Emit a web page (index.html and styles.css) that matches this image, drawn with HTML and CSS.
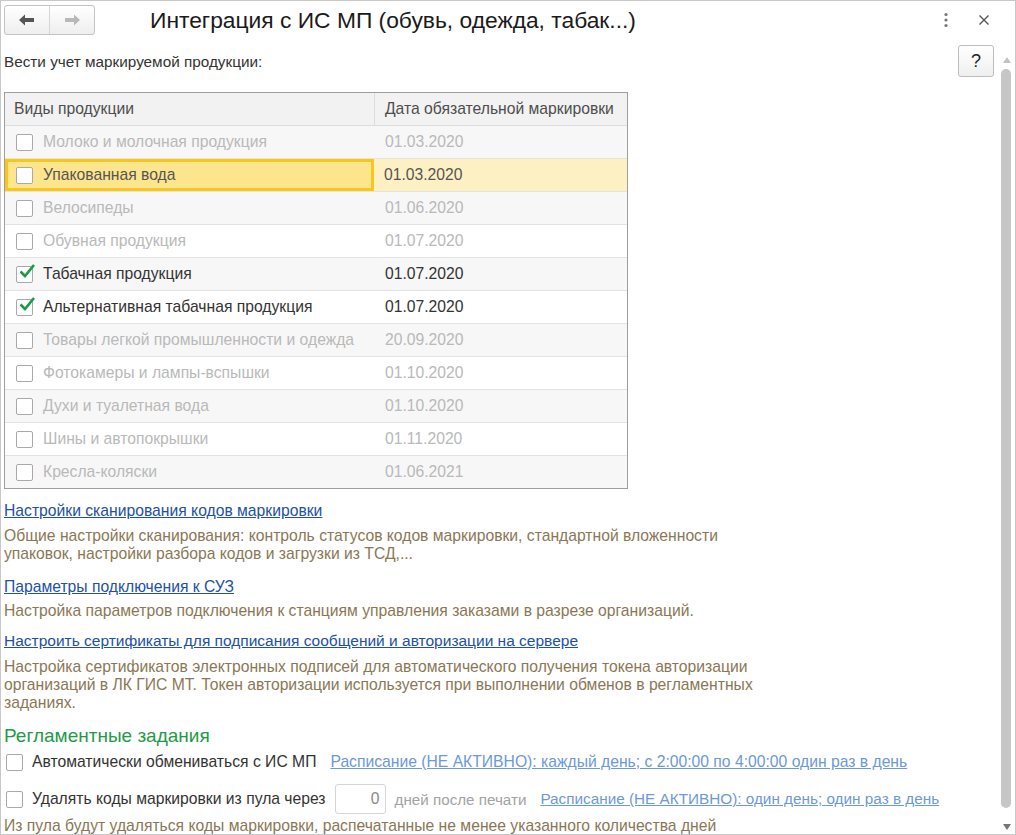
FILE: index.html
```html
<!DOCTYPE html>
<html lang="ru">
<head>
<meta charset="utf-8">
<title>Интеграция с ИС МП</title>
<link rel="stylesheet" href="styles.css">
</head>
<body>
<div class="window">
  <div class="topbar">
    <div class="nav">
      <button class="nav-btn">
        <svg width="18" height="14" viewBox="0 0 18 14"><path d="M1 7 L7 1.5 V5 H16 V9 H7 V12.5 Z" fill="#555"/></svg>
      </button>
      <button class="nav-btn">
        <svg width="18" height="14" viewBox="0 0 18 14"><path d="M17 7 L11 1.5 V5 H2 V9 H11 V12.5 Z" fill="#b8b8b8"/></svg>
      </button>
    </div>
    <h1 class="title">Интеграция с ИС МП (обувь, одежда, табак...)</h1>
    <div class="win-actions">
      <svg class="kebab" width="6" height="16" viewBox="0 0 6 16"><circle cx="3" cy="2.5" r="1.6" fill="#777"/><circle cx="3" cy="8" r="1.6" fill="#777"/><circle cx="3" cy="13.5" r="1.6" fill="#777"/></svg>
      <svg class="close" width="12" height="12" viewBox="0 0 12 12"><path d="M1.5 1.5 L10.5 10.5 M10.5 1.5 L1.5 10.5" stroke="#555" stroke-width="1.4"/></svg>
    </div>
  </div>
  <div class="body">
    <div class="content">
      <div class="lead-row">
        <span class="lead">Вести учет маркируемой продукции:</span>
        <button class="help">?</button>
      </div>
      <div class="grid">
        <div class="grid-head">
          <div class="c1">Виды продукции</div>
          <div class="c2">Дата обязательной маркировки</div>
        </div>
        <div class="row odd dis"><div class="c1"><span class="cb"></span>Молоко и молочная продукция</div><div class="c2">01.03.2020</div></div>
        <div class="row cur"><div class="c1"><span class="cb"></span>Упакованная вода</div><div class="c2">01.03.2020</div></div>
        <div class="row odd dis"><div class="c1"><span class="cb"></span>Велосипеды</div><div class="c2">01.06.2020</div></div>
        <div class="row dis"><div class="c1"><span class="cb"></span>Обувная продукция</div><div class="c2">01.07.2020</div></div>
        <div class="row odd"><div class="c1"><span class="cb"><svg class="tick" width="18" height="16" viewBox="0 0 18 16"><path d="M2.5 8.5 L7 13 L16 2" fill="none" stroke="#1a9b48" stroke-width="2.6"/></svg></span>Табачная продукция</div><div class="c2">01.07.2020</div></div>
        <div class="row"><div class="c1"><span class="cb"><svg class="tick" width="18" height="16" viewBox="0 0 18 16"><path d="M2.5 8.5 L7 13 L16 2" fill="none" stroke="#1a9b48" stroke-width="2.6"/></svg></span>Альтернативная табачная продукция</div><div class="c2">01.07.2020</div></div>
        <div class="row odd dis"><div class="c1"><span class="cb"></span>Товары легкой промышленности и одежда</div><div class="c2">20.09.2020</div></div>
        <div class="row dis"><div class="c1"><span class="cb"></span>Фотокамеры и лампы-вспышки</div><div class="c2">01.10.2020</div></div>
        <div class="row odd dis"><div class="c1"><span class="cb"></span>Духи и туалетная вода</div><div class="c2">01.10.2020</div></div>
        <div class="row dis"><div class="c1"><span class="cb"></span>Шины и автопокрышки</div><div class="c2">01.11.2020</div></div>
        <div class="row odd dis"><div class="c1"><span class="cb"></span>Кресла-коляски</div><div class="c2">01.06.2021</div></div>
      </div>

      <a class="link l1" href="#">Настройки сканирования кодов маркировки</a>
      <p class="desc d1">Общие настройки сканирования: контроль статусов кодов маркировки, стандартной вложенности упаковок, настройки разбора кодов и загрузки из ТСД,...</p>
      <a class="link l2" href="#">Параметры подключения к СУЗ</a>
      <p class="desc d2">Настройка параметров подключения к станциям управления заказами в разрезе организаций.</p>
      <a class="link l3" href="#">Настроить сертификаты для подписания сообщений и авторизации на сервере</a>
      <p class="desc d3">Настройка сертификатов электронных подписей для автоматического получения токена авторизации организаций в ЛК ГИС МТ. Токен авторизации используется при выполнении обменов в регламентных заданиях.</p>

      <h2 class="section">Регламентные задания</h2>
      <div class="task t1">
        <span class="cb"></span>
        <span class="task-label">Автоматически обмениваться с ИС МП</span>
        <a class="sched" href="#">Расписание (НЕ АКТИВНО): каждый день; с 2:00:00 по 4:00:00 один раз в день</a>
      </div>
      <div class="task t2">
        <span class="cb"></span>
        <span class="task-label">Удалять коды маркировки из пула через</span>
        <span class="num">0</span>
        <span class="days">дней после печати</span>
        <a class="sched" href="#">Расписание (НЕ АКТИВНО): один день; один раз в день</a>
      </div>
      <p class="desc note">Из пула будут удаляться коды маркировки, распечатанные не менее указанного количества дней</p>
    </div>
    <div class="scrollbar">
      <span class="arrow up"></span>
      <span class="thumb"></span>
      <span class="arrow down"></span>
    </div>
  </div>
</div>
</body>
</html>
```

FILE: styles.css
```css
* { box-sizing: border-box; }
html, body { margin: 0; padding: 0; background: #fff; }
body { font-family: "Liberation Sans", Arial, sans-serif; font-size: 15.7px; color: #333; }

.window {
  width: 1016px;
  height: 835px;
  border: 1px solid #c8c8c8;
  overflow: hidden;
  background: #fff;
  display: flex;
  flex-direction: column;
}

.topbar {
  height: 37px;
  flex: none;
  display: flex;
  align-items: center;
  padding-left: 3px;
}
.nav {
  display: flex;
  width: 91px;
  height: 30px;
  border: 1px solid #c3c3c3;
  border-radius: 3px;
  background: linear-gradient(#ffffff, #eeeeee);
  margin-top: 1px;
}
.nav-btn {
  flex: 1;
  border: 0;
  background: transparent;
  padding: 0;
  display: flex;
  align-items: center;
  justify-content: center;
}
.nav-btn + .nav-btn { border-left: 1px solid #d6d6d6; }
.title {
  margin: 1px 0 0 55px;
  font-weight: normal;
  font-size: 22.8px;
  color: #1a1a1a;
  flex: 1;
  white-space: nowrap;
}
.win-actions {
  display: flex;
  align-items: center;
  gap: 29px;
  padding-right: 25px;
}
.kebab { display: block; }
.close { display: block; }

.body {
  flex: 1;
  display: flex;
  min-height: 0;
}
.content {
  flex: 1;
  padding-left: 3px;
  padding-right: 6px;
  min-width: 0;
}

.lead-row {
  display: flex;
  justify-content: space-between;
  align-items: center;
  margin-top: 8px;
  height: 32px;
}
.lead { color: #333; font-size: 15.3px; }
.help {
  width: 36px;
  height: 32px;
  border: 1px solid #bdbdbd;
  border-radius: 3px;
  background: linear-gradient(#ffffff, #efefef);
  font-family: "Liberation Sans", Arial, sans-serif;
  font-size: 18px;
  color: #222;
  padding: 0;
  margin-top: -2px;
}

.grid {
  margin-top: 14px;
  width: 624px;
  border: 1px solid #9e9e9e;
}
.grid-head {
  display: flex;
  height: 33px;
  background: #f2f2f2;
  border-bottom: 1px solid #dcdcdc;
  color: #4d4d4d;
}
.grid-head .c1 { width: 370px; padding-left: 9px; display: flex; align-items: center; border-right: 1px solid #dcdcdc; }
.grid-head .c2 { flex: 1; padding-left: 10px; display: flex; align-items: center; }

.row {
  display: flex;
  height: 33px;
  border-bottom: 1px solid #e3e3e3;
  background: #fff;
  color: #333;
}
.row:last-child { border-bottom: 0; height: 32px; }
.row.odd { background: #f7f7f7; }
.row.dis { color: #b9b9b9; }
.row .c1 { width: 370px; padding-left: 11px; display: flex; align-items: center; }
.row .c2 { flex: 1; padding-left: 10px; display: flex; align-items: center; }
.row.cur { background: #fdf1c4; color: #555; }
.row.cur .c1 {
  background: #fde58e;
  border: 3px solid #f7c81a;
  padding-left: 8px;
  width: 369px;
}

.cb {
  position: relative;
  flex: none;
  width: 17px;
  height: 17px;
  border: 1px solid #a9a9a9;
  border-radius: 2px;
  background: #fff;
  margin-right: 10px;
}
.tick { position: absolute; left: 1px; top: -4px; }

.link {
  display: block;
  color: #2150a6;
  text-decoration: underline;
  line-height: 18px;
  width: max-content;
}
.l3 { font-size: 15.5px; }
.desc {
  margin: 0;
  color: #8a7755;
  line-height: 18px;
  width: 760px;
  font-size: 15.7px;
}
.l1 { margin-top: 13px; }
.d1 { margin-top: 7px; }
.l2 { margin-top: 15px; }
.d2 { margin-top: 6px; }
.l3 { margin-top: 12px; }
.d3 { margin-top: 8px; }

.section {
  margin: 13px 0 0;
  font-weight: normal;
  font-size: 19px;
  line-height: 22px;
  color: #1f9a4a;
}
.task {
  display: flex;
  align-items: center;
  height: 30px;
}
.task .cb { margin-left: 2px; margin-right: 9px; }
.t1 { margin-top: 0; }
.t2 { margin-top: 7px; }
.task-label { color: #333; }
.t1 .sched { margin-left: 14px; }
.t2 .num {
  margin-left: 9px;
  width: 51px;
  height: 30px;
  border: 1px solid #d5d5d5;
  border-radius: 3px;
  text-align: right;
  padding-right: 5px;
  line-height: 28px;
  color: #888;
}
.days { color: #a3a3a3; margin-left: 9px; font-size: 15.2px; }
.t2 .sched { margin-left: 14px; font-size: 15.3px; }
.sched { color: #6c99d8; text-decoration: underline; }
.note { width: auto; margin-top: 3px; white-space: nowrap; }

.scrollbar {
  width: 14px;
  flex: none;
  position: relative;
  margin-right: 1px;
}
.arrow {
  position: absolute;
  left: 3px;
  width: 0;
  height: 0;
  border-left: 4px solid transparent;
  border-right: 4px solid transparent;
}
.arrow.up { top: 19px; border-bottom: 6px solid #c2c2c2; }
.arrow.down { bottom: 4px; border-top: 6px solid #777; }
.thumb {
  position: absolute;
  left: 1px;
  top: 31px;
  width: 10px;
  height: 739px;
  border-radius: 5px;
  background: #c6c6c6;
}
```
